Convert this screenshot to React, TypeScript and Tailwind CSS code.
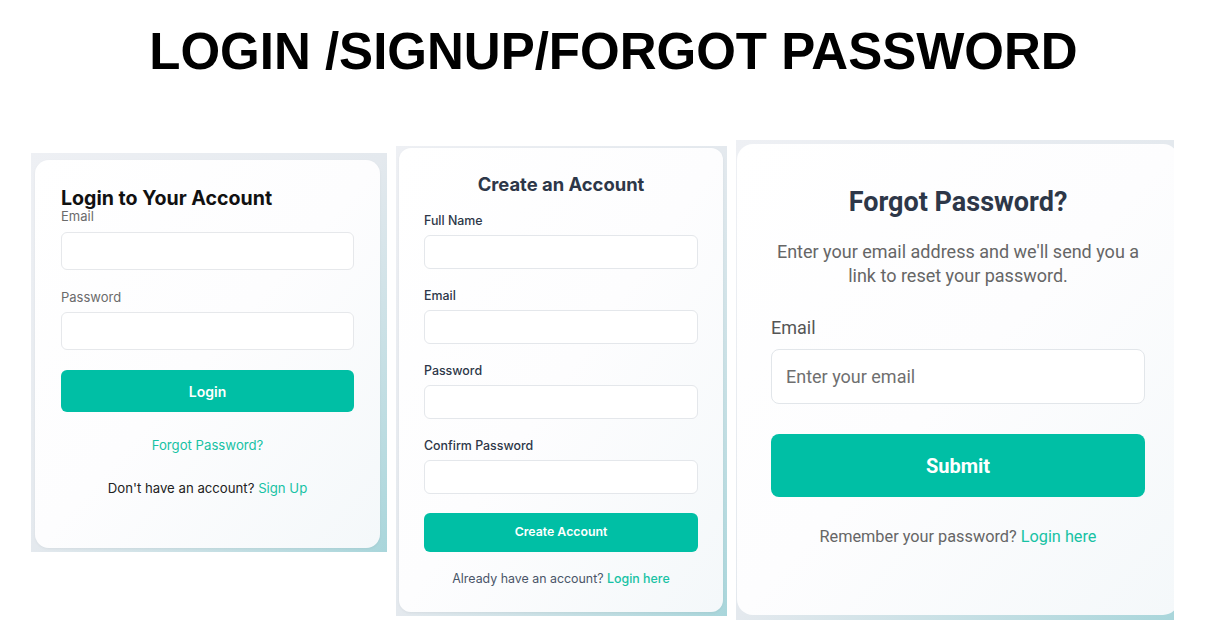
import React from "react";

function Input1() {
  return <div className="h-[38px] w-full rounded-md border border-[#e6e8eb] bg-white" />;
}

function Input2() {
  return <div className="h-[34px] w-full rounded-md border border-[#e4e7eb] bg-white" />;
}

export default function App() {
  return (
    <div className="w-[1227px] h-[621px] bg-white overflow-hidden">
      <h1 className="pt-[26px] text-center text-[51px] leading-[51px] font-bold text-black font-['Liberation_Sans',Arial,sans-serif]">
        LOGIN /SIGNUP/FORGOT PASSWORD
      </h1>
      <div className="mt-[63px] flex items-start gap-[9px] pl-[31px] font-['Inter',sans-serif]">
        {/* Panel 1 */}
        <div className="mt-[13px] h-[399px] w-[356px] bg-linear-to-br from-[#eef0f4] via-[#e4e9ee] to-[#a9d6db] pl-[4px] pt-[7px]">
          <div className="h-[388px] w-[345px] rounded-[14px] bg-linear-to-br from-white via-[#fdfdfe] to-[#f4f8fa] px-[26px] pt-[28px] shadow-[0_1px_3px_rgba(0,0,0,0.05)]">
            <h2 className="text-[19.6px] leading-[20px] font-bold text-[#111]">Login to Your Account</h2>
            <div className="text-[13px] leading-4 text-[#6b6b6b]">Email</div>
            <div className="mt-2">
              <Input1 />
            </div>
            <div className="mt-[19px] text-[13px] leading-4 text-[#6b6b6b]">Password</div>
            <div className="mt-[7px]">
              <Input1 />
            </div>
            <button className="mt-[20px] flex h-[42px] w-full items-center justify-center rounded-md bg-[#00bfa5] text-[14px] font-semibold text-white">
              Login
            </button>
            <div className="mt-[23px] text-center text-[13.2px] leading-5 text-[#17c2a4]">Forgot Password?</div>
            <div className="mt-[23px] text-center text-[13.2px] leading-5 text-[#222]">
              Don't have an account? <span className="text-[#17c2a4]">Sign Up</span>
            </div>
          </div>
        </div>

        {/* Panel 2 */}
        <div className="mt-[6px] h-[470px] w-[331px] bg-linear-to-br from-[#eef0f4] via-[#e4e9ee] to-[#a9d6db] pl-[3px] pt-[2px]">
          <div className="h-[464px] w-[324px] rounded-[12px] bg-linear-to-br from-white via-[#fdfdfe] to-[#f4f8fa] px-[25px] pt-[24px] shadow-[0_1px_3px_rgba(0,0,0,0.05)]">
            <h2 className="text-center text-[18.4px] leading-6 font-bold text-[#2d3748]">Create an Account</h2>
            <div className="mt-[17px] text-[12.4px] leading-4 font-medium text-[#2d3748]">Full Name</div>
            <div className="mt-[6px]"><Input2 /></div>
            <div className="mt-[19px] text-[12.4px] leading-4 font-medium text-[#2d3748]">Email</div>
            <div className="mt-[6px]"><Input2 /></div>
            <div className="mt-[19px] text-[12.4px] leading-4 font-medium text-[#2d3748]">Password</div>
            <div className="mt-[6px]"><Input2 /></div>
            <div className="mt-[19px] text-[12.4px] leading-4 font-medium text-[#2d3748]">Confirm Password</div>
            <div className="mt-[6px]"><Input2 /></div>
            <button className="mt-[19px] flex h-[39px] w-full items-center justify-center rounded-md bg-[#00bfa5] text-[12.3px] font-semibold text-white">
              Create Account
            </button>
            <div className="mt-[19px] text-center text-[12.4px] leading-4 text-[#4a5568]">
              Already have an account? <span className="font-medium text-[#17c2a4]">Login here</span>
            </div>
          </div>
        </div>

        {/* Panel 3 */}
        <div className="h-[480px] w-[438px] overflow-hidden bg-linear-to-br from-[#eef0f4] via-[#e4e9ee] to-[#a9d6db] pl-[1px] pt-[4px] font-['Roboto',sans-serif]">
          <div className="h-[471px] w-[442px] shrink-0 rounded-[16px] bg-linear-to-br from-white via-[#fdfdfe] to-[#f4f8fa] px-[34px] pt-[42px]">
            <h2 className="text-center text-[27px] leading-[32px] font-bold text-[#2d3748]">Forgot Password?</h2>
            <p className="mt-[22px] text-center text-[18px] leading-[23.5px] text-[#666]">
              Enter your email address and we'll send you a link to reset your password.
            </p>
            <div className="mt-[29px] text-[18px] leading-6 text-[#555]">Email</div>
            <div className="mt-[9px] flex h-[55px] w-full items-center rounded-lg border border-[#e2e6ea] bg-white pl-[14px] text-[18px] text-[#6f6f6f]">
              Enter your email
            </div>
            <button className="mt-[30px] flex h-[63px] w-full items-center justify-center rounded-lg bg-[#00bfa5] text-[20px] font-bold text-white">
              Submit
            </button>
            <div className="mt-[28px] text-center text-[16.3px] leading-6 text-[#666]">
              Remember your password? <span className="text-[#17c2a4]">Login here</span>
            </div>
          </div>
        </div>
      </div>
    </div>
  );
}
